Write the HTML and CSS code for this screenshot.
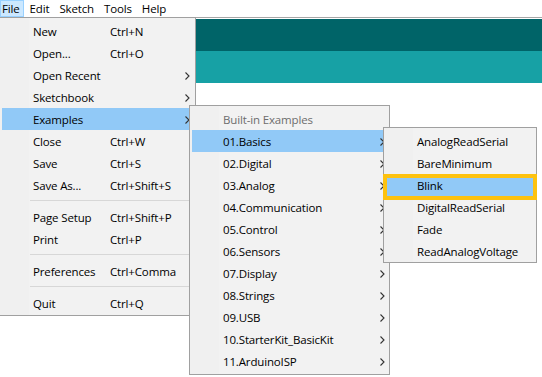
FILE: index.html
```html
<!DOCTYPE html>
<html>
<head>
<meta charset="utf-8">
<link rel="stylesheet" href="styles.css">
</head>
<body>
<div class="menubar">
  <span class="mb-item active">File</span>
  <span class="mb-item">Edit</span>
  <span class="mb-item">Sketch</span>
  <span class="mb-item">Tools</span>
  <span class="mb-item">Help</span>
</div>
<div class="stage">
  <div class="band dark"></div>
  <div class="band light"></div>

  <div class="menu file-menu">
    <div class="row"><span class="label">New</span><span class="key">Ctrl+N</span></div>
    <div class="row"><span class="label">Open...</span><span class="key">Ctrl+O</span></div>
    <div class="row"><span class="label">Open Recent</span><svg class="arrow" width="5" height="8" viewBox="0 0 5 8"><polyline points="0.5,0.5 4,4 0.5,7.5" fill="none" stroke="#333" stroke-width="1.1"/></svg></div>
    <div class="row"><span class="label">Sketchbook</span><svg class="arrow" width="5" height="8" viewBox="0 0 5 8"><polyline points="0.5,0.5 4,4 0.5,7.5" fill="none" stroke="#333" stroke-width="1.1"/></svg></div>
    <div class="row sel"><span class="label">Examples</span><svg class="arrow" width="5" height="8" viewBox="0 0 5 8"><polyline points="0.5,0.5 4,4 0.5,7.5" fill="none" stroke="#333" stroke-width="1.1"/></svg></div>
    <div class="row"><span class="label">Close</span><span class="key">Ctrl+W</span></div>
    <div class="row"><span class="label">Save</span><span class="key">Ctrl+S</span></div>
    <div class="row"><span class="label">Save As...</span><span class="key">Ctrl+Shift+S</span></div>
    <div class="sep"></div>
    <div class="row"><span class="label">Page Setup</span><span class="key">Ctrl+Shift+P</span></div>
    <div class="row"><span class="label">Print</span><span class="key">Ctrl+P</span></div>
    <div class="sep"></div>
    <div class="row"><span class="label">Preferences</span><span class="key">Ctrl+Comma</span></div>
    <div class="sep"></div>
    <div class="row"><span class="label">Quit</span><span class="key">Ctrl+Q</span></div>
  </div>

  <div class="menu ex-menu">
    <div class="row header"><span class="label">Built-in Examples</span></div>
    <div class="row sel"><span class="label">01.Basics</span><svg class="arrow" width="5" height="8" viewBox="0 0 5 8"><polyline points="0.5,0.5 4,4 0.5,7.5" fill="none" stroke="#333" stroke-width="1.1"/></svg></div>
    <div class="row"><span class="label">02.Digital</span><svg class="arrow" width="5" height="8" viewBox="0 0 5 8"><polyline points="0.5,0.5 4,4 0.5,7.5" fill="none" stroke="#333" stroke-width="1.1"/></svg></div>
    <div class="row"><span class="label">03.Analog</span><svg class="arrow" width="5" height="8" viewBox="0 0 5 8"><polyline points="0.5,0.5 4,4 0.5,7.5" fill="none" stroke="#333" stroke-width="1.1"/></svg></div>
    <div class="row"><span class="label">04.Communication</span><svg class="arrow" width="5" height="8" viewBox="0 0 5 8"><polyline points="0.5,0.5 4,4 0.5,7.5" fill="none" stroke="#333" stroke-width="1.1"/></svg></div>
    <div class="row"><span class="label">05.Control</span><svg class="arrow" width="5" height="8" viewBox="0 0 5 8"><polyline points="0.5,0.5 4,4 0.5,7.5" fill="none" stroke="#333" stroke-width="1.1"/></svg></div>
    <div class="row"><span class="label">06.Sensors</span><svg class="arrow" width="5" height="8" viewBox="0 0 5 8"><polyline points="0.5,0.5 4,4 0.5,7.5" fill="none" stroke="#333" stroke-width="1.1"/></svg></div>
    <div class="row"><span class="label">07.Display</span><svg class="arrow" width="5" height="8" viewBox="0 0 5 8"><polyline points="0.5,0.5 4,4 0.5,7.5" fill="none" stroke="#333" stroke-width="1.1"/></svg></div>
    <div class="row"><span class="label">08.Strings</span><svg class="arrow" width="5" height="8" viewBox="0 0 5 8"><polyline points="0.5,0.5 4,4 0.5,7.5" fill="none" stroke="#333" stroke-width="1.1"/></svg></div>
    <div class="row"><span class="label">09.USB</span><svg class="arrow" width="5" height="8" viewBox="0 0 5 8"><polyline points="0.5,0.5 4,4 0.5,7.5" fill="none" stroke="#333" stroke-width="1.1"/></svg></div>
    <div class="row"><span class="label">10.StarterKit_BasicKit</span><svg class="arrow" width="5" height="8" viewBox="0 0 5 8"><polyline points="0.5,0.5 4,4 0.5,7.5" fill="none" stroke="#333" stroke-width="1.1"/></svg></div>
    <div class="row"><span class="label">11.ArduinoISP</span><svg class="arrow" width="5" height="8" viewBox="0 0 5 8"><polyline points="0.5,0.5 4,4 0.5,7.5" fill="none" stroke="#333" stroke-width="1.1"/></svg></div>
  </div>

  <div class="menu basics-menu">
    <div class="row"><span class="label">AnalogReadSerial</span></div>
    <div class="row"><span class="label">BareMinimum</span></div>
    <div class="row sel marked"><span class="label">Blink</span></div>
    <div class="row"><span class="label">DigitalReadSerial</span></div>
    <div class="row"><span class="label">Fade</span></div>
    <div class="row"><span class="label">ReadAnalogVoltage</span></div>
  </div>
</div>
</body>
</html>
```

FILE: styles.css
```css
* { box-sizing: border-box; }
html, body { margin: 0; padding: 0; }
body {
  width: 542px;
  height: 377px;
  overflow: hidden;
  background: #ffffff;
  font-family: "Open Sans", "Noto Sans", sans-serif;
  font-size: 11.5px;
  letter-spacing: -0.15px;
  color: #000;
}
.menubar {
  display: flex;
  height: 18px;
  border-bottom: 1px solid #a6a6a6;
  background: #fff;
  line-height: 16px;
}
.mb-item {
  padding: 0 3px 0 1px;
  margin-right: 4px;
  height: 17px;
  border: 1px solid transparent;
}
.mb-item.active {
  background: #cce8ff;
  border-color: #99d1ff;
}
.stage {
  position: relative;
  height: 359px;
  padding-top: 1px;
}
.band { height: 32px; }
.band.dark { background: #006468; }
.band.light { background: #17a1a5; }

.menu {
  position: absolute;
  background: linear-gradient(to right, #f0f0f0 0, #f0f0f0 29px, #f2f2f2 29px);
  border: 1px solid #a0a0a0;
  padding: 2px 0 1px;
}
.row {
  position: relative;
  display: flex;
  align-items: center;
  height: 22px;
  margin: 0 2px;
  padding-left: 31px;
  padding-top: 1px;
  white-space: nowrap;
}
.row.sel { background: #91c9f7; }
.row .key {
  position: absolute;
  left: 108px;
}
.row .arrow {
  position: absolute;
  right: 4px;
  top: 8px;
}
.row.header .label { color: #6d6d6d; }
.sep {
  height: 10px;
  position: relative;
}
.sep::after {
  content: "";
  position: absolute;
  left: 30px;
  right: 2px;
  top: 4px;
  height: 1px;
  background: #d7d7d7;
}

.file-menu {
  left: -1px;
  top: -1px;
  width: 197px;
}
.file-menu .row .arrow { right: 3px; }
.ex-menu {
  left: 189px;
  top: 87px;
  width: 201px;
  padding-bottom: 2px;
}
.ex-menu .row .arrow { right: 2px; }
.basics-menu {
  left: 383px;
  top: 109px;
  width: 154px;
  padding-bottom: 0;
}
.row.marked::after {
  content: "";
  position: absolute;
  left: -3px;
  right: -3px;
  top: 0;
  bottom: -4px;
  border: 4px solid #fdc20f;
}
```
